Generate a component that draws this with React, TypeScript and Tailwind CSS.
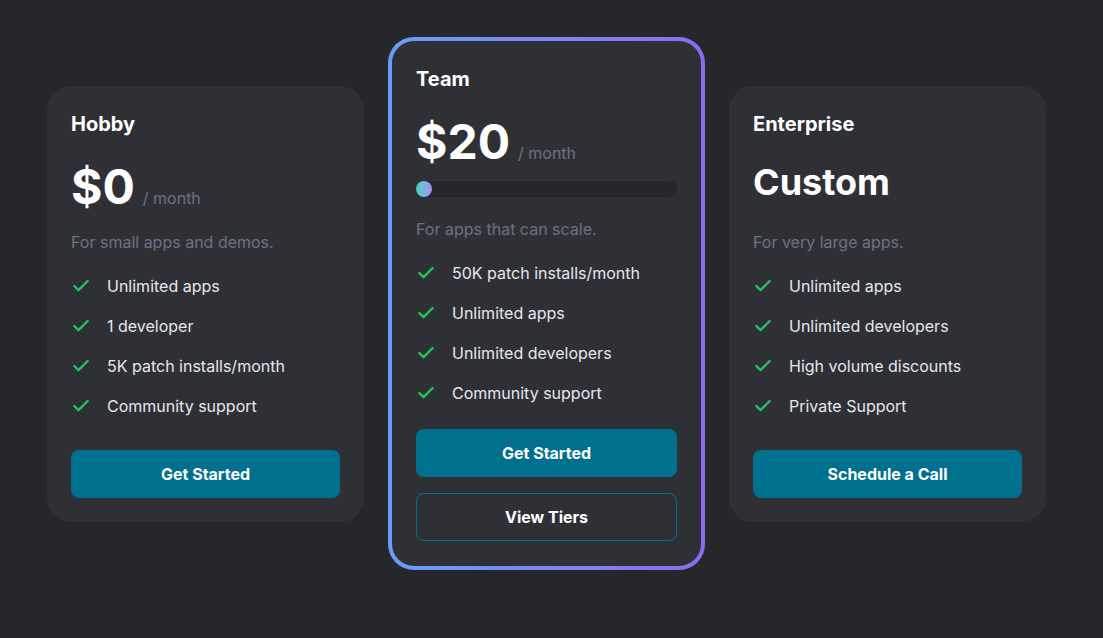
import React from "react";
import { Check } from "lucide-react";

const font = { fontFamily: "Inter, 'Noto Sans', sans-serif" };

function Feature({ text }: { text: string }) {
  return (
    <li className="flex items-center gap-4 h-6">
      <Check className="w-5 h-5 text-[#22c55e] shrink-0" strokeWidth={2.75} />
      <span className="text-base leading-6 text-[#e5e7eb]">{text}</span>
    </li>
  );
}

function Features({ items }: { items: string[] }) {
  return (
    <ul className="flex flex-col gap-4">
      {items.map((t) => (
        <Feature key={t} text={t} />
      ))}
    </ul>
  );
}

function PrimaryButton({ label }: { label: string }) {
  return (
    <button className="w-full h-12 rounded-lg bg-[#00708f] text-white font-bold text-base">
      {label}
    </button>
  );
}

export default function App() {
  return (
    <div
      className="w-[1103px] h-[638px] bg-[#26272b] flex items-start pl-[47px] pt-[37px] gap-6"
      style={font}
    >
      {/* Hobby */}
      <div className="mt-[49px] w-[317px] rounded-3xl bg-[#2f3036] p-6 flex flex-col">
        <h2 className="text-xl leading-7 font-bold text-white">Hobby</h2>
        <div className="mt-[25px] flex items-baseline gap-2">
          <span className="text-5xl leading-none font-bold text-white">$0</span>
          <span className="text-base text-[#6b7280]">/ month</span>
        </div>
        <p className="mt-[19px] text-base leading-6 text-[#6b7280]">For small apps and demos.</p>
        <div className="mt-5">
          <Features items={["Unlimited apps", "1 developer", "5K patch installs/month", "Community support"]} />
        </div>
        <div className="mt-8">
          <PrimaryButton label="Get Started" />
        </div>
      </div>

      {/* Team */}
      <div className="w-[317px] rounded-[26px] p-1 bg-gradient-to-r from-[#679ef8] to-[#8b6bf2]">
        <div className="rounded-[22px] bg-[#2f3036] px-6 pt-6 pb-[25px] flex flex-col">
          <h2 className="text-xl leading-7 font-bold text-white">Team</h2>
          <div className="mt-[25px] flex items-baseline gap-2">
            <span className="text-5xl leading-none font-bold text-white">$20</span>
            <span className="text-base text-[#6b7280]">/ month</span>
          </div>
          <div className="mt-[15px] h-4 w-full rounded-full bg-[#25262b]">
            <div className="w-4 h-4 rounded-full bg-gradient-to-r from-[#2dd4bf] to-[#a78bfa]" />
          </div>
          <p className="mt-5 text-base leading-6 text-[#6b7280]">For apps that can scale.</p>
          <div className="mt-5">
            <Features items={["50K patch installs/month", "Unlimited apps", "Unlimited developers", "Community support"]} />
          </div>
          <div className="mt-6">
            <PrimaryButton label="Get Started" />
          </div>
          <button className="mt-4 w-full h-12 rounded-lg border border-[#00708f] text-white font-bold text-base">
            View Tiers
          </button>
        </div>
      </div>

      {/* Enterprise */}
      <div className="mt-[49px] w-[317px] rounded-3xl bg-[#2f3036] p-6 flex flex-col">
        <h2 className="text-xl leading-7 font-bold text-white">Enterprise</h2>
        <div className="mt-5 h-12 flex items-center">
          <span className="text-4xl leading-none font-bold text-white">Custom</span>
        </div>
        <p className="mt-6 text-base leading-6 text-[#6b7280]">For very large apps.</p>
        <div className="mt-5">
          <Features items={["Unlimited apps", "Unlimited developers", "High volume discounts", "Private Support"]} />
        </div>
        <div className="mt-8">
          <PrimaryButton label="Schedule a Call" />
        </div>
      </div>
    </div>
  );
}
